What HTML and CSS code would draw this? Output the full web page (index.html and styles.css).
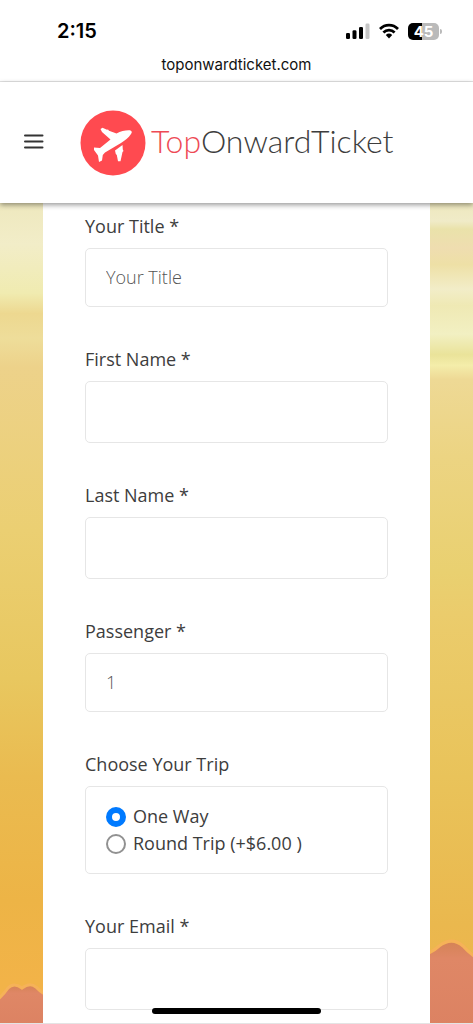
FILE: index.html
```html
<!DOCTYPE html>
<html lang="en">
<head>
<meta charset="utf-8">
<meta name="viewport" content="width=device-width, initial-scale=1">
<title>TopOnwardTicket</title>
<link rel="stylesheet" href="styles.css">
</head>
<body>
<div class="status">
  <div class="status-row">
    <span class="clock">2:15</span>
    <div class="indicators">
      <svg class="signal" width="24" height="16" viewBox="0 0 24 16" aria-hidden="true">
        <rect x="0" y="10" width="4" height="6" rx="1.3"/>
        <rect x="6.5" y="7.3" width="4" height="8.7" rx="1.3"/>
        <rect x="13" y="4" width="4" height="12" rx="1.3"/>
        <rect x="19.5" y="0.5" width="4" height="15.5" rx="1.3" fill="#c6c6c6"/>
      </svg>
      <svg class="wifi" width="20" height="16" viewBox="0 0 20 16" aria-hidden="true">
        <g fill="none" stroke="#000" stroke-width="2.7">
          <path d="M1 6C6 .8 14 .8 19 6"/>
          <path d="M4.4 9.5C7.6 6.3 12.400 6.300 15.600 9.500"/>
        </g>
        <path d="M6.800 12Q10 9.200 13.200 12L10 15.500Z"/>
      </svg>
      <span class="battery">45</span>
    </div>
  </div>
</div>
<div class="address">toponwardticket.com</div>
<header class="site-header">
  <button class="menu" type="button" aria-label="Menu">
    <svg width="20" height="16" viewBox="0 0 20 16" stroke="#333" stroke-width="2" stroke-linecap="round"><path d="M1 1.500H18.500M1 7.500H18.500M1 13.500H18.500"/></svg>
  </button>
  <a class="brand" href="#">
    <svg class="brand-mark" width="66" height="66" viewBox="0 0 66 66" aria-hidden="true">
      <circle cx="33" cy="33" r="32.500" fill="#ff4a50"/>
      <path fill="#fff" d="M20.500 19L22.500 17.700L27 19.800L28 19.500L29 20.700L36.500 23.500C41 21 46 20 50 20.300Q53 21.500 51 24C48.500 28 45 30.500 41 33L25 42.500L22.800 45L22 50.500L19 52L18 45.500L14 40L14 37.500L20 38L30.500 29.500L22 22ZM35 40.500L42.500 35L42.800 39.500L43.500 41L42.500 42L40.500 51.300L38 51.300L36.800 45L35.800 44Z"/>
    </svg>
    <span class="brand-name"><span class="brand-accent">Top</span>OnwardTicket</span>
  </a>
</header>
<main class="page">
  <svg class="scenery" viewBox="0 0 473 821" preserveAspectRatio="none" aria-hidden="true">
    <defs>
      <linearGradient id="sky" x1="0" y1="0" x2="0" y2="1">
        <stop offset="0" stop-color="#eee8be"/>
        <stop offset=".05" stop-color="#f2edc8"/>
        <stop offset=".11" stop-color="#f0ebb0"/>
        <stop offset=".135" stop-color="#edd890"/>
        <stop offset=".165" stop-color="#eedd9a"/>
        <stop offset=".2" stop-color="#edd28a"/>
        <stop offset=".4" stop-color="#ebcf72"/>
        <stop offset=".58" stop-color="#e8c75f"/>
        <stop offset=".7" stop-color="#eabb50"/>
        <stop offset=".85" stop-color="#edb446"/>
        <stop offset=".95" stop-color="#f2b348"/>
        <stop offset="1" stop-color="#f2b34c"/>
      </linearGradient>
      <linearGradient id="sky-east" x1="0" y1="0" x2="0" y2="1">
        <stop offset="0" stop-color="#eee8be"/>
        <stop offset=".022" stop-color="#f0ebc8"/>
        <stop offset=".032" stop-color="#eae2aa"/>
        <stop offset=".055" stop-color="#efddb0"/>
        <stop offset=".075" stop-color="#eee0a6"/>
        <stop offset=".105" stop-color="#f2edc8"/>
        <stop offset=".125" stop-color="#efe9b4"/>
        <stop offset=".16" stop-color="#f2f0c2"/>
        <stop offset=".185" stop-color="#eae39a"/>
        <stop offset=".198" stop-color="#f4edaa"/>
        <stop offset=".215" stop-color="#eed995"/>
        <stop offset=".31" stop-color="#ecd482"/>
        <stop offset=".45" stop-color="#e9d070"/>
        <stop offset=".5" stop-color="#ebcc6c"/>
        <stop offset=".7" stop-color="#e9c35a"/>
        <stop offset=".88" stop-color="#eab84e"/>
        <stop offset="1" stop-color="#f2b34c"/>
      </linearGradient>
      <linearGradient id="ridge" x1="0" y1="0" x2="0" y2="1">
        <stop offset="0" stop-color="#d48355"/>
        <stop offset=".2" stop-color="#df8766"/>
        <stop offset="1" stop-color="#dc8262"/>
      </linearGradient>
    </defs>
    <rect width="237" height="821" fill="url(#sky)"/>
    <rect x="237" width="236" height="821" fill="url(#sky-east)"/>
    <g fill="url(#ridge)" stroke="#f6b258" stroke-width="3">
      <path d="M-4 799Q4 792 8 786Q14 780 22 786Q30 780 36 785Q42 792 60 800V825H-4Z"/>
      <path d="M415 756Q432 751 439 744Q452 734 463 744Q469 751 477 756V825H415Z"/>
    </g>
  </svg>
  <form class="card">
    <div class="field">
      <label class="label" for="title">Your Title *</label>
      <select class="control select" id="title"><option>Your Title</option></select>
    </div>
    <div class="field">
      <label class="label" for="first">First Name *</label>
      <input class="control input" id="first" type="text">
    </div>
    <div class="field">
      <label class="label" for="last">Last Name *</label>
      <input class="control input" id="last" type="text">
    </div>
    <div class="field">
      <label class="label" for="passenger">Passenger *</label>
      <select class="control select" id="passenger"><option>1</option></select>
    </div>
    <div class="field" role="radiogroup" aria-labelledby="trip">
      <span class="label" id="trip">Choose Your Trip</span>
      <div class="control choices">
        <label class="choice"><input class="radio" type="radio" name="trip" checked>One Way</label>
        <label class="choice"><input class="radio" type="radio" name="trip">Round Trip (+$6.00 )</label>
      </div>
    </div>
    <div class="field">
      <label class="label" for="email">Your Email *</label>
      <input class="control input" id="email" type="email">
    </div>
  </form>
</main>
<div class="home-bar"></div>
</body>
</html>
```
FILE: styles.css
```css
* { box-sizing: border-box; }
body {
  margin: 0;
  min-height: 100vh;
  display: flex;
  flex-direction: column;
  background: #fff;
  color: #3d3d3d;
  font-family: "Open Sans", sans-serif;
  font-size: 18px;
}
.status {
  padding: 19px 34px 0 57px;
  color: #000;
  font-family: Inter, sans-serif;
}
.status-row {
  display: flex;
  align-items: center;
  justify-content: space-between;
  height: 24px;
}
.clock { font-size: 20px; font-weight: 600; }
.indicators { display: flex; align-items: center; gap: 9px; }
.battery {
  position: relative;
  width: 31px;
  height: 17px;
  border-radius: 5px;
  background: linear-gradient(90deg, #000 45%, #bababa 45%);
  color: #fff;
  font-size: 15px;
  font-weight: 700;
  line-height: 17px;
  text-align: center;
}
.battery::after {
  content: "";
  position: absolute;
  left: 32px;
  top: 6px;
  width: 2px;
  height: 5px;
  border-radius: 0 2px 2px 0;
  background: #bababa;
}
.address {
  padding: 11px 0 5px;
  border-bottom: 1px solid #e4e4e4;
  color: #111;
  font-family: Inter, sans-serif;
  font-size: 15px;
  line-height: 22px;
  text-align: center;
}
.site-header {
  position: relative;
  z-index: 1;
  display: flex;
  align-items: center;
  gap: 36px;
  height: 121px;
  padding: 0 24px;
  background: #fff;
  box-shadow: 0 2px 5px rgba(0, 0, 0, .4);
}
.menu {
  display: flex;
  padding: 0 0 2px;
  border: 0;
  background: none;
}
.brand {
  display: flex;
  align-items: center;
  gap: 5px;
  color: #3d3d3d;
  text-decoration: none;
}
.brand-name {
  padding-bottom: 4px;
  font-family: Lato, sans-serif;
  font-size: 32px;
  font-weight: 300;
  line-height: 40px;
}
.brand-accent { color: #ee4a55; }
.page {
  position: relative;
  flex: 1;
  padding: 0 43px;
  border-bottom: 1px solid #e4e4e4;
}
.scenery {
  position: absolute;
  inset: 0;
  width: 100%;
  height: 100%;
}
.card {
  position: relative;
  display: flex;
  flex-direction: column;
  gap: 39px;
  padding: 10px 42px 13px;
  background: #fff;
}
.field { display: flex; flex-direction: column; gap: 8px; }
.label { line-height: 27px; }
.control {
  width: 100%;
  margin: 0;
  border: 1px solid #e6e6e6;
  border-radius: 5px;
  background: #fff;
  color: #555;
  font: inherit;
}
.select {
  height: 59px;
  padding: 0 20px 2px;
  appearance: none;
  font-weight: 300;
}
.input { height: 62px; padding: 0 20px; }
.choices { padding: 16px 20px; height: 88px; color: #3d3d3d; }
.choice {
  display: flex;
  align-items: center;
  gap: 7px;
  line-height: 27px;
}
.radio {
  width: 20px;
  height: 20px;
  margin: 0;
  border: 2px solid #919191;
  border-radius: 50%;
  background: #fff;
  appearance: none;
}
.radio:checked { border: 6px solid #007aff; }
.home-bar {
  position: fixed;
  bottom: 10px;
  left: 50%;
  width: 169px;
  height: 6px;
  margin-left: -85px;
  border-radius: 3px;
  background: #000;
}
```
